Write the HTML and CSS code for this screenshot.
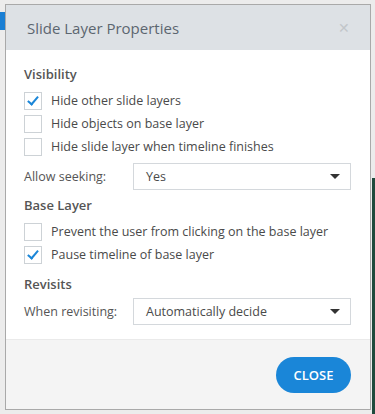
FILE: index.html
```html
<!DOCTYPE html>
<html>
<head>
    <title>Slide Layer Properties</title>
    <link rel="stylesheet" href="styles.css">
</head>
<body>
    <div class="dialog">
        <div class="dialog-header">
            <h1>Slide Layer Properties</h1>
            <span class="close-x">&#x2715;</span>
        </div>
        <div class="dialog-body">
            <h2>Visibility</h2>
            <label class="check"><span class="box checked"></span>Hide other slide layers</label>
            <label class="check"><span class="box"></span>Hide objects on base layer</label>
            <label class="check"><span class="box"></span>Hide slide layer when timeline finishes</label>
            <div class="field">
                <span class="field-label">Allow seeking:</span>
                <div class="select">Yes<span class="caret"></span></div>
            </div>

            <h2>Base Layer</h2>
            <label class="check"><span class="box"></span>Prevent the user from clicking on the base layer</label>
            <label class="check"><span class="box checked"></span>Pause timeline of base layer</label>

            <h2 class="spaced">Revisits</h2>
            <div class="field tight">
                <span class="field-label">When revisiting:</span>
                <div class="select">Automatically decide<span class="caret"></span></div>
            </div>
        </div>
        <div class="dialog-footer">
            <button class="btn">CLOSE</button>
        </div>
    </div>
</body>
</html>
```

FILE: styles.css
```css
body {
    margin: 0;
    padding: 4px 3px 4px 5px;
    font-family: "Open Sans", "Noto Sans", Arial, sans-serif;
    background:
        linear-gradient(to right, transparent 372px, #1f4a3c 372px) 0 178px / 100% 236px no-repeat,
        linear-gradient(#1a7fd4, #1a7fd4) 0 12px / 5px 18px no-repeat,
        #ececec;
    color: #444;
}

.dialog {
    width: 366px;
    height: 406px;
    box-sizing: border-box;
    border: 1px solid #a9a9a9;
    display: flex;
    flex-direction: column;
    background: #fff;
}

.dialog-header {
    height: 45px;
    background-color: #dde1e5;
    display: flex;
    align-items: center;
    justify-content: space-between;
    padding: 0 20px 0 21px;
}

.dialog-header h1 {
    margin: 0;
    font-size: 15px;
    font-weight: normal;
    color: #5c6670;
}

.close-x {
    color: #c2c6ca;
    font-size: 14px;
}

.dialog-body {
    flex: 1;
    padding: 15px 19px 0 18px;
    font-size: 12.5px;
}

h2 {
    margin: 0 0 6px;
    font-size: 13px;
    font-weight: 600;
    color: #555;
}

h2.spaced {
    margin: 9px 0 5px;
}

.check {
    display: flex;
    align-items: center;
    height: 23px;
    color: #4a4a4a;
}

.box {
    width: 16px;
    height: 16px;
    border: 1px solid #cdd2d6;
    margin-right: 9px;
    position: relative;
    flex: none;
}

.box.checked::after {
    content: "";
    position: absolute;
    left: 5px;
    top: 1px;
    width: 4px;
    height: 9px;
    border: solid #1a86d8;
    border-width: 0 2px 2px 0;
    transform: rotate(40deg);
}

.field {
    display: flex;
    align-items: center;
    margin: 5px 0 6px;
}

.field.tight {
    margin-top: 0;
}

.field-label {
    width: 109px;
    color: #555;
}

.select {
    flex: 1;
    height: 27px;
    box-sizing: border-box;
    border: 1px solid #d4d8dc;
    display: flex;
    align-items: center;
    justify-content: space-between;
    padding: 0 10px 0 12px;
    color: #4a4a4a;
}

.caret {
    width: 0;
    height: 0;
    border-left: 5px solid transparent;
    border-right: 5px solid transparent;
    border-top: 5px solid #333;
}

.dialog-footer {
    height: 69px;
    background-color: #f4f4f4;
    border-top: 1px solid #eaeaea;
    display: flex;
    align-items: center;
    justify-content: flex-end;
    padding: 0 19px 0 0;
}

.btn {
    background-color: #1a86d8;
    color: #fff;
    border: none;
    border-radius: 18px;
    width: 75px;
    height: 36px;
    font-family: inherit;
    font-size: 13px;
    font-weight: 600;
    cursor: pointer;
}
```
